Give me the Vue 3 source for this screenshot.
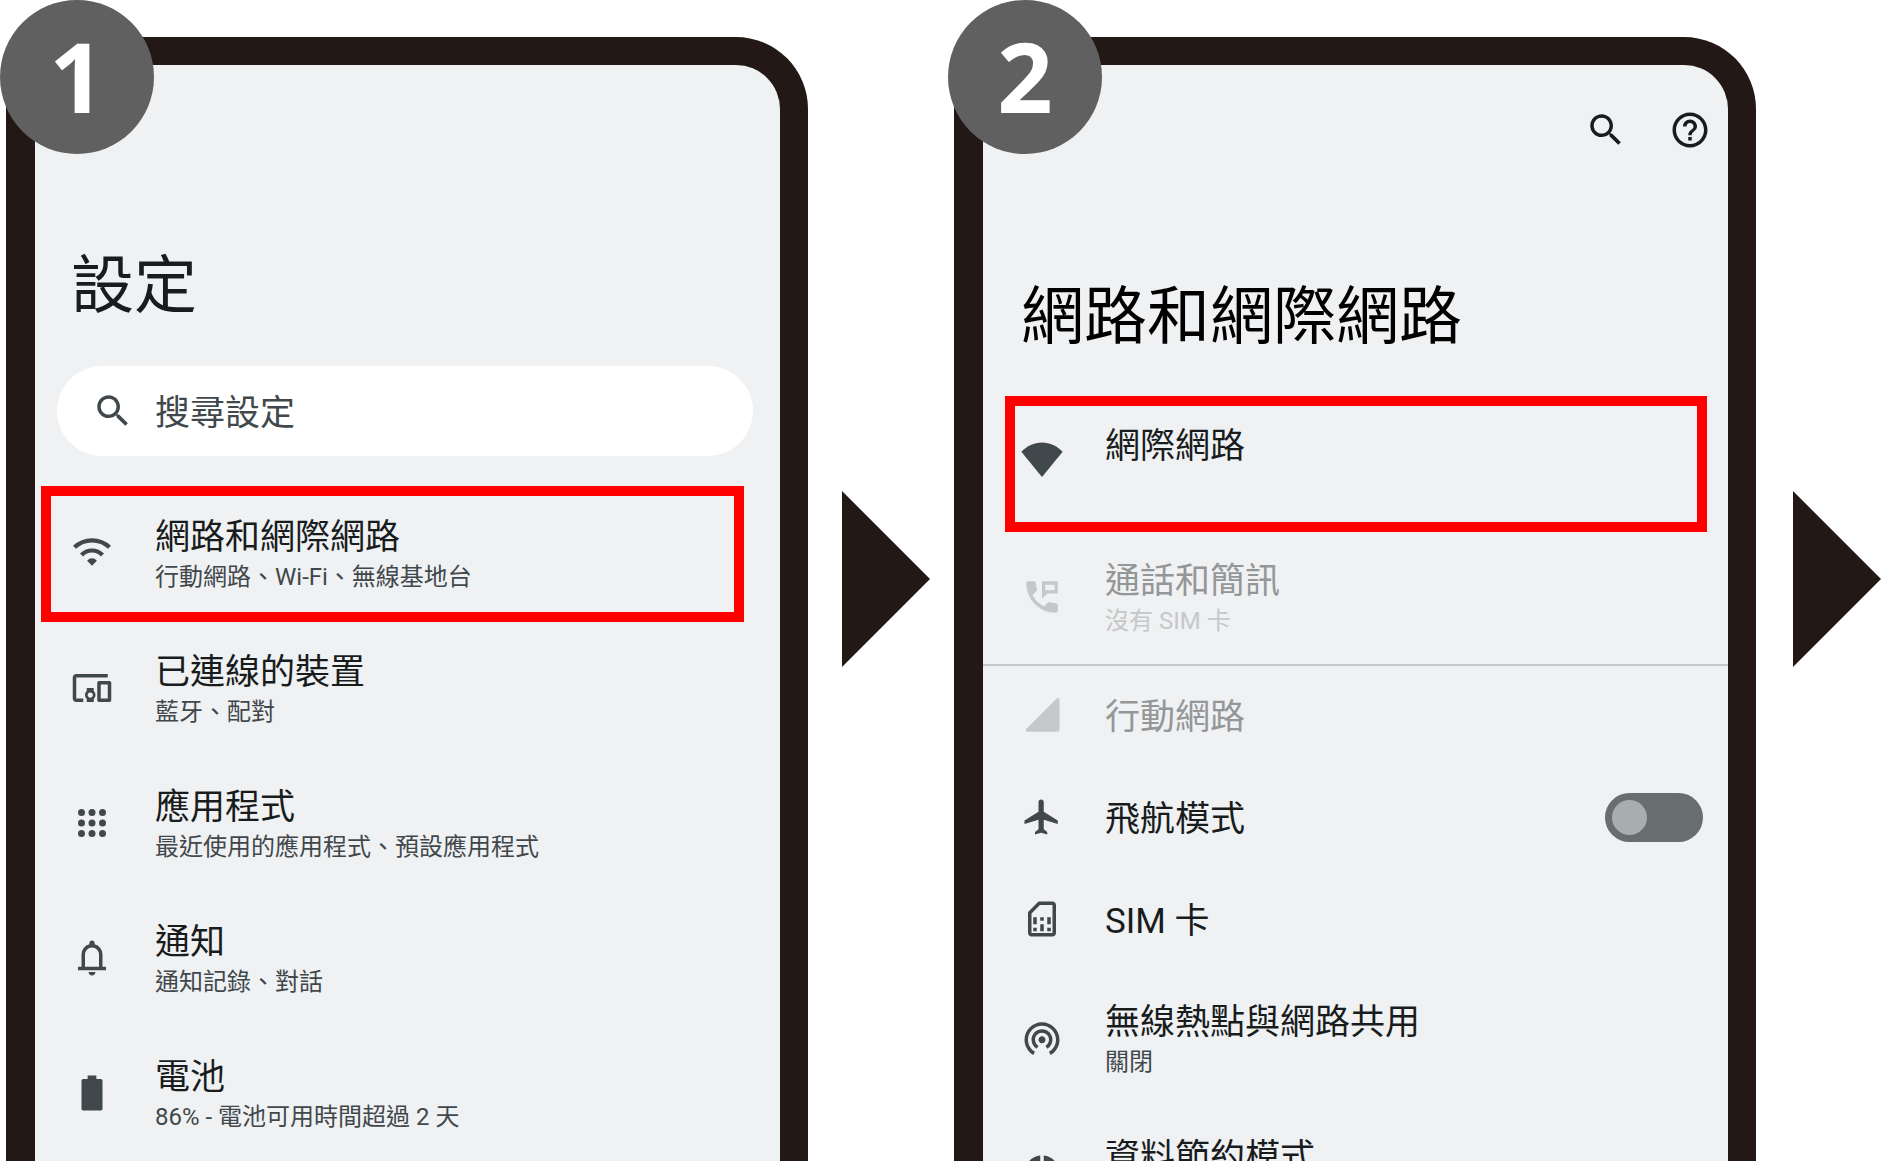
<template>
  <main class="guide">
    <template v-for="screen in screens" :key="screen.step">
      <section class="step" :class="screen.name">
        <span class="badge">{{ screen.step }}</span>

        <div class="phone">
          <!-- Toolbar -->
          <div class="toolbar">
            <button
              v-for="action in screen.actions"
              :key="action.icon"
              class="tool-btn"
              type="button"
              :aria-label="action.label"
            >
              <svg class="icon" viewBox="0 0 24 24"><path :d="icons[action.icon]" /></svg>
            </button>
          </div>

          <h1 class="title">{{ screen.title }}</h1>

          <!-- Search -->
          <label v-if="screen.search" class="search">
            <svg class="icon" viewBox="0 0 24 24"><path :d="icons.search" /></svg>
            <input
              v-model="query"
              class="search-input"
              type="text"
              :placeholder="screen.search"
              :aria-label="screen.search"
            />
          </label>

          <!-- Settings list -->
          <ul class="list">
            <li v-for="item in screen.items" :key="item.label" class="list-item">
              <component
                :is="item.toggle ? 'label' : 'button'"
                class="row"
                :class="{ highlight: item.highlight, single: item.sub === undefined }"
                :type="item.toggle ? undefined : 'button'"
                :disabled="item.disabled"
              >
                <svg class="icon" viewBox="0 0 24 24">
                  <path :d="icons[item.icon]" fill-rule="evenodd" />
                  <path v-if="item.icon === 'wifi'" class="waves" :d="wifiWaves" />
                </svg>
                <span class="texts">
                  <span class="label">{{ item.label }}</span>
                  <span v-if="item.sub !== undefined" class="sub">{{ item.sub }}</span>
                </span>
                <input
                  v-if="item.toggle"
                  v-model="airplaneMode"
                  class="switch"
                  type="checkbox"
                  role="switch"
                />
              </component>
              <hr v-if="item.divider" class="divider" />
            </li>
          </ul>
        </div>
      </section>

      <div class="next">
        <svg class="arrow" viewBox="0 0 88 176"><path d="M0 0L88 88L0 176z" /></svg>
      </div>
    </template>
  </main>
</template>

<script setup>
import { ref } from 'vue'

const query = ref('')
const airplaneMode = ref(false)

const screens = [
  {
    step: 1,
    name: 'settings',
    title: '設定',
    search: '搜尋設定',
    actions: [],
    items: [
      { icon: 'wifi', label: '網路和網際網路', sub: '行動網路、Wi-Fi、無線基地台', highlight: true },
      { icon: 'devices', label: '已連線的裝置', sub: '藍牙、配對' },
      { icon: 'apps', label: '應用程式', sub: '最近使用的應用程式、預設應用程式' },
      { icon: 'bell', label: '通知', sub: '通知記錄、對話' },
      { icon: 'battery', label: '電池', sub: '86% - 電池可用時間超過 2 天' }
    ]
  },
  {
    step: 2,
    name: 'network',
    title: '網路和網際網路',
    actions: [
      { icon: 'search', label: '搜尋' },
      { icon: 'help', label: '說明' }
    ],
    items: [
      { icon: 'signalWifi', label: '網際網路', sub: '', highlight: true },
      { icon: 'phoneMsg', label: '通話和簡訊', sub: '沒有 SIM 卡', disabled: true, divider: true },
      { icon: 'signal', label: '行動網路', disabled: true },
      { icon: 'airplane', label: '飛航模式', toggle: true },
      { icon: 'sim', label: 'SIM 卡' },
      { icon: 'hotspot', label: '無線熱點與網路共用', sub: '關閉' },
      { icon: 'dataSaver', label: '資料節約模式', sub: '' }
    ]
  }
]

const wifiWaves = 'M2 9.3A14.5 14.5 0 0 1 22 9.3M6 13.7A8.3 8.3 0 0 1 18 13.7'

const icons = {
  search: 'M15.5 14h-.79l-.28-.27C15.41 12.59 16 11.11 16 9.5 16 5.91 13.09 3 9.5 3S3 5.91 3 9.5 5.91 16 9.5 16c1.61 0 3.09-.59 4.23-1.57l.27.28v.79l5 4.99L20.49 19l-4.99-5zm-6 0C7.01 14 5 11.99 5 9.5S7.01 5 9.5 5 14 7.01 14 9.5 11.99 14 9.5 14z',
  help: 'M11 18h2v-2h-2v2zm1-16C6.48 2 2 6.48 2 12s4.48 10 10 10 10-4.48 10-10S17.52 2 12 2zm0 18c-4.41 0-8-3.59-8-8s3.59-8 8-8 8 3.59 8 8-3.59 8-8 8zm0-14c-2.21 0-4 1.79-4 4h2c0-1.1.9-2 2-2s2 .9 2 2c0 2-3 1.75-3 5h2c0-2.25 3-2.5 3-5 0-2.21-1.79-4-4-4z',
  wifi: 'M12 19.8L9.2 17C10 15.9 11 15.5 12 15.5s2 .4 2.8 1.5z',
  devices: 'M3 6h18V4H3c-1.1 0-2 .9-2 2v12c0 1.1.9 2 2 2h4v-2H3V6zm10 6H9v1.78c-.61.55-1 1.33-1 2.22s.39 1.67 1 2.22V20h4v-1.78c.61-.55 1-1.34 1-2.22s-.39-1.67-1-2.22V12zm-2 5.5c-.83 0-1.5-.67-1.5-1.5s.67-1.5 1.5-1.5 1.5.67 1.5 1.5-.67 1.5-1.5 1.5zM22 8h-6c-.5 0-1 .5-1 1v10c0 .5.5 1 1 1h6c.5 0 1-.5 1-1V9c0-.5-.5-1-1-1zm-1 10h-4v-8h4v8z',
  apps: [6, 12, 18]
    .flatMap(y => [4, 10, 16].map(x => `M${x} ${y}a2 2 0 1 0 4 0a2 2 0 1 0-4 0z`))
    .join(''),
  bell: 'M4 19v-2h2v-7q0-2.075 1.25-3.688T10.5 4.2v-.7q0-.625.438-1.062T12 2t1.063.438T13.5 3.5v.7q2 .5 3.25 2.113T18 10v7h2v2H4Zm8 3q-.825 0-1.413-.588T10 20h4q0 .825-.588 1.413T12 22Zm-4-5h8v-7q0-1.65-1.175-2.825T12 6 9.175 7.175 8 10v7Z',
  battery: 'M17 4h-2.5V2h-5v2H7c-.6 0-1 .4-1 1v16c0 .6.4 1 1 1h10c.6 0 1-.4 1-1V5c0-.6-.4-1-1-1z',
  signalWifi: 'M12 21.2L.2 6.7C3.4 3.4 7.4 1.4 12 1.4s8.6 2 11.8 5.3z',
  phoneMsg: 'M20 15.5c-1.25 0-2.45-.2-3.57-.57-.35-.11-.74-.03-1.02.24l-2.2 2.2c-2.83-1.44-5.15-3.75-6.59-6.58l2.2-2.21c.28-.27.36-.66.25-1.01C8.7 6.45 8.5 5.25 8.5 4c0-.55-.45-1-1-1H4c-.55 0-1 .45-1 1 0 9.39 7.61 17 17 17 .55 0 1-.45 1-1v-3.5c0-.55-.45-1-1-1zM12 3v10l3-3h6V3h-9zM13.8 5h5.4v3.2h-5.4z',
  signal: 'M3.6 21.5h17.4c.6 0 1-.4 1-1V3.2c0-.9-1-1.2-1.6-.6L3 20c-.6.6-.2 1.5.6 1.5z',
  airplane: 'M21 16v-2l-8-5V3.5c0-.83-.67-1.5-1.5-1.5S10 2.67 10 3.5V9l-8 5v2l8-2.5V19l-2 1.5V22l3.5-1 3.5 1v-1.5L13 19v-5.5l8 2.5z',
  sim: 'M18 2h-8L4 8v12c0 1.1.9 2 2 2h12c1.1 0 2-.9 2-2V4c0-1.1-.9-2-2-2zm0 18H6V8.83L10.83 4H18v16zM7 17h2v2H7zM15 17h2v2h-2zM7 11h2v4H7zM11 15h2v4h-2zM11 11h2v2h-2zM15 11h2v4h-2z',
  hotspot: 'M12 11c-1.1 0-2 .9-2 2s.9 2 2 2 2-.9 2-2-.9-2-2-2zm6 2c0-3.31-2.69-6-6-6s-6 2.69-6 6c0 2.22 1.21 4.15 3 5.19l1-1.74c-1.19-.7-2-1.97-2-3.45 0-2.21 1.79-4 4-4s4 1.79 4 4c0 1.48-.81 2.75-2 3.45l1 1.74c1.79-1.04 3-2.97 3-5.19zM12 3C6.48 3 2 7.48 2 13c0 3.7 2.01 6.92 4.99 8.65l1-1.73C5.61 18.53 4 15.96 4 13c0-4.42 3.58-8 8-8s8 3.58 8 8c0 2.96-1.61 5.53-4 6.92l1 1.73c2.99-1.73 5-4.95 5-8.65 0-5.52-4.48-10-10-10z',
  dataSaver: 'M13 2.05v3.03c3.39.49 6 3.39 6 6.92 0 .9-.18 1.75-.48 2.54l2.6 1.53c.56-1.24.88-2.62.88-4.07 0-5.18-3.95-9.45-9-9.95zM12 19c-3.87 0-7-3.13-7-7 0-3.53 2.61-6.43 6-6.92V2.05c-5.06.5-9 4.76-9 9.95 0 5.52 4.47 10 9.99 10 3.31 0 6.24-1.61 8.06-4.09l-2.6-1.53C16.17 17.98 14.21 19 12 19z'
}
</script>

<style>
body {
  margin: 0;
  background: #fff;
}
</style>

<style scoped>
.guide {
  display: grid;
  grid-template-columns: minmax(0, 1fr) 146px minmax(0, 1fr) 126px;
  height: 100vh;
  padding-left: 6px;
  box-sizing: border-box;
  overflow: hidden;
  font-family: Roboto, "Noto Sans CJK TC", sans-serif;
  color: #191c1d;
}

.step {
  position: relative;
  padding-top: 37px;
  min-width: 0;
}

/* Step number */
.badge {
  position: absolute;
  top: 0;
  left: -6px;
  width: 154px;
  height: 154px;
  border-radius: 50%;
  background: #606060;
  color: #fff;
  font-family: "Open Sans", "Noto Sans", sans-serif;
  font-size: 97px;
  font-weight: 700;
  line-height: 150px;
  text-align: center;
}

.phone {
  border: 28px solid #231815;
  border-left-width: 29px;
  border-bottom: none;
  border-radius: 72px 72px 0 0;
  background: #eff1f3;
}

/* Toolbar */
.toolbar {
  display: flex;
  justify-content: flex-end;
  gap: 42px;
  padding: 44px 17px 0 0;
  height: 134px;
}

.network .toolbar {
  height: 165px;
}

.tool-btn {
  display: block;
  width: 42px;
  height: 42px;
  padding: 0;
  border: none;
  background: none;
  color: #191c1d;
  cursor: pointer;
}

.icon {
  display: block;
  flex-shrink: 0;
  width: 42px;
  height: 42px;
  fill: currentColor;
}

.waves {
  fill: none;
  stroke: currentColor;
  stroke-width: 2.4;
}

.title {
  margin: 0 0 37px;
  padding-left: 36px;
  font-size: 63px;
  font-weight: 400;
  line-height: 86px;
  white-space: nowrap;
}

.network .title {
  margin-bottom: 36px;
  padding-left: 38px;
  color: #000;
}

/* Search */
.search {
  display: flex;
  align-items: center;
  gap: 21px;
  height: 90px;
  margin: 0 27px 30px 22px;
  padding: 0 35px;
  box-sizing: border-box;
  border-radius: 45px;
  background: #fff;
  color: #41484b;
}

.search-input {
  flex: 1;
  min-width: 0;
  padding: 5px 0 0;
  border: none;
  outline: none;
  background: none;
  color: inherit;
  font-family: inherit;
  font-size: 35px;
  line-height: 44px;
}

.search-input::placeholder {
  color: #41484b;
  opacity: 1;
}

/* List */
.list {
  list-style: none;
  margin: 0;
  padding: 0;
}

.row {
  display: flex;
  align-items: center;
  gap: 42px;
  width: calc(100% - 42px);
  height: 135px;
  margin: 0 36px 0 6px;
  padding: 0 4px 4px 30px;
  box-sizing: border-box;
  border: none;
  background: none;
  color: #191c1d;
  font-family: inherit;
  text-align: left;
  cursor: pointer;
}

.network .row {
  margin: 0 21px 0 22px;
  padding-bottom: 6px;
  padding-left: 16px;
  width: calc(100% - 43px);
}

.row.single {
  height: 102px;
}

.row.highlight {
  height: 136px;
  outline: 10px solid #f00;
  outline-offset: -10px;
}

.row .icon {
  color: #41484b;
}

.texts {
  flex: 1;
  min-width: 0;
  padding-top: 5px;
  white-space: nowrap;
}

.label {
  display: block;
  font-size: 35px;
  line-height: 44px;
}

.sub {
  display: block;
  height: 34px;
  font-size: 24px;
  line-height: 34px;
  color: #41484b;
}

.row:disabled {
  color: #949698;
  cursor: default;
}

.row:disabled .icon,
.row:disabled .sub {
  color: #c5c7c8;
}

.divider {
  height: 2px;
  margin: -3px 0 1px;
  border: none;
  background: #c5c7c9;
}

/* Switch */
.switch {
  appearance: none;
  display: flex;
  align-items: center;
  flex-shrink: 0;
  width: 98px;
  height: 49px;
  margin: 0;
  padding: 0 7px;
  box-sizing: border-box;
  border-radius: 25px;
  background: #686d70;
  cursor: pointer;
}

.switch::before {
  content: "";
  width: 35px;
  height: 35px;
  border-radius: 50%;
  background: #a8adb0;
}

.switch:checked {
  justify-content: flex-end;
}

/* Arrow to the next step */
.next {
  padding: 491px 24px 0 34px;
}

.next:last-child {
  padding: 491px 1px 0 37px;
}

.arrow {
  display: block;
  width: 88px;
  height: 176px;
  fill: #231815;
}
</style>
